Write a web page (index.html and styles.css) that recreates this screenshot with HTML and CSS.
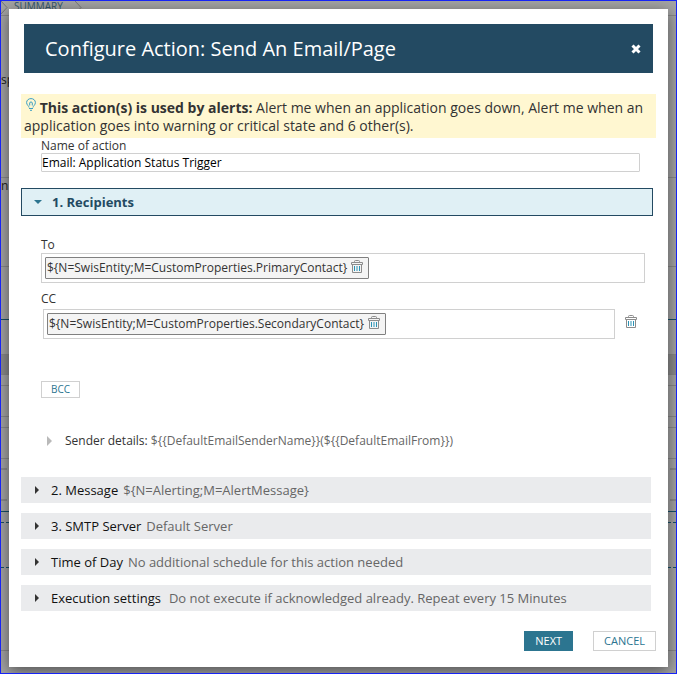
FILE: index.html
```html
<!DOCTYPE html>
<html lang="en">
<head>
    <meta charset="utf-8">
    <title>Configure Action: Send An Email/Page</title>
    <link rel="stylesheet" href="styles.css">
</head>
<body>
    <!-- icons shared by the dialog -->
    <svg class="sprite" aria-hidden="true">
        <symbol id="trash" viewBox="0 0 12 13">
            <path d="M3.500 2V1.500Q3.500 .5 4.500 .5H7.500Q8.500 .5 8.500 1.500V2M.5 2.500H11.500V4.500H.5zM1.500 4.500V12.500H10.500V4.500" fill="none" stroke="#8c8c8c"/>
            <path d="M3.500 6V11M6 6V11M8.500 6V11" fill="none" stroke="#2b93b5"/>
        </symbol>
    </svg>

    <div class="screen">
        <div class="page" aria-hidden="true">
            <div class="row crumbs">
                <svg class="chevron" viewBox="0 0 7 14"><path d="M0 0L6 6.500L0 13"/></svg>
                <span class="crumb">SUMMARY</span>
                <svg class="chevron" viewBox="0 0 7 14"><path d="M0 0L6 6.500L0 13"/></svg>
            </div>
            <div class="row intro">sp</div>
            <div class="row name">n</div>
            <div class="row tabs"></div>
            <div class="row space"></div>
            <div class="row band"></div>
            <div class="row thin"></div>
            <div class="row line"></div>
            <div class="row thin"></div>
            <div class="row line"></div>
            <div class="row thin ticks"></div>
            <div class="row line ticks"></div>
            <div class="row thin teal"></div>
            <div class="row thin dashed"></div>
            <div class="row drop dashed"></div>
            <div class="row foot"></div>
        </div>

        <div class="dialog" role="dialog" aria-labelledby="title">
            <div class="header">
                <h1 id="title">Configure Action: Send An Email/Page</h1>
                <button class="close" type="button" aria-label="Close">
                    <svg width="10" height="10" viewBox="0 0 10 10"><path d="M1.500 1.500L8.500 8.500M8.500 1.500L1.500 8.500" stroke="#fff" stroke-width="3"/></svg>
                </button>
            </div>

            <p class="note">
                <svg class="bulb" width="10" height="13" viewBox="0 0 10 13" fill="none" stroke="#3c9fc4">
                    <path d="M3 9.500C3 8 .6 7 .6 4.600C.6 2.200 2.600 .6 5 .6S9.400 2.200 9.400 4.600C9.400 7 7 8 7 9.500"/>
                    <path d="M3.700 7.500V5Q3.700 4 5 4T6.300 5V7.500M3 10.500H7M4 12.300H6"/>
                </svg>
                <strong>This action(s) is used by alerts:</strong> Alert me when an application goes down, Alert me when an application goes into warning or critical state and 6 other(s).
            </p>

            <form>
                <div class="field">
                    <label for="actionName">Name of action</label>
                    <input class="input" type="text" id="actionName" value="Email: Application Status Trigger">
                </div>

                <button class="section open" type="button" aria-expanded="true">
                    <svg class="arrow" width="8" height="8" viewBox="0 0 8 8"><path d="M0 2H8L4 6z"/></svg>
                    1. Recipients
                </button>

                <div class="recipients">
                    <label for="to">To</label>
                    <div class="tokens">
                        <span class="token">${N=SwisEntity;M=CustomProperties.PrimaryContact}
                            <button class="remove" type="button" aria-label="Remove"><svg width="12" height="13"><use href="#trash"/></svg></button>
                        </span>
                        <input type="text" id="to">
                    </div>
                    <label for="cc">CC</label>
                    <div class="cc">
                        <div class="tokens">
                            <span class="token">${N=SwisEntity;M=CustomProperties.SecondaryContact}
                                <button class="remove" type="button" aria-label="Remove"><svg width="12" height="13"><use href="#trash"/></svg></button>
                            </span>
                            <input type="text" id="cc">
                        </div>
                        <button class="remove" type="button" aria-label="Remove CC"><svg width="12" height="13"><use href="#trash"/></svg></button>
                    </div>
                    <button class="bcc" type="button">BCC</button>
                    <button class="sender" type="button" aria-expanded="false">
                        <svg width="5" height="10" viewBox="0 0 5 10"><path d="M0 0L5 5L0 10z" fill="#b9b9b9"/></svg>
                        <span>Sender details: <span class="value">${{DefaultEmailSenderName}}(${{DefaultEmailFrom}})</span></span>
                    </button>
                </div>

                <div class="sections">
                    <button class="section" type="button" aria-expanded="false">
                        <svg class="arrow" width="8" height="8" viewBox="0 0 8 8"><path d="M2 0L6 4L2 8z"/></svg>
                        2. Message <span class="value">${N=Alerting;M=AlertMessage}</span>
                    </button>
                    <button class="section" type="button" aria-expanded="false">
                        <svg class="arrow" width="8" height="8" viewBox="0 0 8 8"><path d="M2 0L6 4L2 8z"/></svg>
                        3. SMTP Server <span class="value">Default Server</span>
                    </button>
                    <button class="section" type="button" aria-expanded="false">
                        <svg class="arrow" width="8" height="8" viewBox="0 0 8 8"><path d="M2 0L6 4L2 8z"/></svg>
                        Time of Day <span class="value">No additional schedule for this action needed</span>
                    </button>
                    <button class="section wide" type="button" aria-expanded="false">
                        <svg class="arrow" width="8" height="8" viewBox="0 0 8 8"><path d="M2 0L6 4L2 8z"/></svg>
                        Execution settings <span class="value">Do not execute if acknowledged already. Repeat every 15 Minutes</span>
                    </button>
                </div>

                <div class="buttons">
                    <button class="button primary" type="button">NEXT</button>
                    <button class="button" type="button">CANCEL</button>
                </div>
            </form>
        </div>
    </div>
</body>
</html>
```
FILE: styles.css
```css
* {
    box-sizing: border-box;
}
body {
    margin: 0;
    font-family: "Open Sans", sans-serif;
    font-size: 12px;
    line-height: 16px;
    color: #333;
}
button, input {
    font: inherit;
    color: inherit;
    border-radius: 0;
}
button {
    padding: 0;
    border: 0;
    background: none;
    text-align: left;
}
svg {
    display: block;
    flex: none;
}
.sprite {
    position: absolute;
    width: 0;
    height: 0;
}
.screen {
    position: relative;
    min-height: 100vh;
    padding: 8px 8px 6px;
    border: 1px solid #1623f5;
    overflow: hidden;
}

/* dimmed page behind the dialog */
.page {
    position: absolute;
    inset: 0;
    background: #a3a3a3;
    color: #222;
}
.row {
    border-bottom: 1px solid #888;
}
.crumbs {
    display: flex;
    gap: 6px;
    height: 15px;
}
.crumb {
    margin: -3px 6px 0 0;
    font-size: 10px;
    color: #31566b;
}
.chevron {
    width: 7px;
    height: 14px;
    fill: none;
    stroke: #777;
}
.intro {
    height: 162px;
    padding-top: 56px;
}
.name {
    height: 89px;
}
.tabs {
    height: 53px;
    border-color: #174f68;
}
.space {
    height: 35px;
}
.band {
    height: 20px;
    background: #8b8b8b;
}
.thin {
    height: 11px;
}
.line {
    height: 31px;
}
.ticks {
    border-bottom: 2px dashed #8b8b8b;
}
.teal {
    border-color: #174f68;
}
.dashed {
    border-bottom: 1px dashed #174f68;
}
.drop {
    height: 45px;
}
.foot {
    height: 83px;
}

.dialog {
    position: relative;
    padding: 15px 12px 16px;
    background: #fff;
    box-shadow: 0 4px 14px rgba(0, 0, 0, 0.5);
}
.header {
    display: flex;
    align-items: center;
    justify-content: space-between;
    height: 49px;
    margin: 0 3px;
    padding: 0 12px 0 21px;
    background: #234a62;
    color: #fff;
}
h1 {
    margin: 0;
    font-size: 20px;
    font-weight: normal;
    line-height: 28px;
}
.note {
    margin: 21px 0 0;
    padding: 4px 3px 3px;
    background: #fff7d1;
    font-size: 14px;
    line-height: 18px;
}
.bulb {
    display: inline-block;
    margin-left: 2px;
    vertical-align: 2px;
}
.field {
    display: flex;
    flex-direction: column;
    margin: 0 16px 16px 20px;
}
.field label {
    line-height: 15px;
}
.input {
    height: 19px;
    padding: 0;
    border: 1px solid #d0d0d0;
    border-radius: 1px;
    color: #000;
}
.section {
    display: flex;
    align-items: center;
    gap: 5px;
    height: 26px;
    padding-left: 12px;
    background: #eaebed;
    font-size: 13px;
    color: #111;
}
.section .arrow {
    margin-right: 5px;
    fill: #333;
}
.wide {
    gap: 8px;
}
.wide .arrow {
    margin-right: 2px;
}
.value {
    color: #666;
}
.open {
    width: calc(100% - 3px);
    height: 28px;
    border: 1px solid #234a62;
    background: #e0f0f5;
    font-weight: bold;
    color: #234a62;
}
.open .arrow {
    fill: #2c7590;
}
.recipients {
    margin: 21px 11px 28px 20px;
}
.recipients label {
    display: block;
}
.tokens {
    display: flex;
    align-items: center;
    flex: 1;
    height: 30px;
    margin-bottom: 8px;
    padding: 0 3px;
    border: 1px solid #d0d0d0;
}
.tokens input {
    flex: 1;
    min-width: 0;
    border: 0;
    outline: 0;
}
.token {
    display: flex;
    align-items: center;
    gap: 4px;
    height: 22px;
    padding: 0 5px 0 1px;
    border: 1px solid #808080;
    border-radius: 1px;
    background: #f4f4f4;
}
.remove {
    margin-bottom: 3px;
}
.cc {
    display: flex;
    align-items: center;
    gap: 10px;
    margin: 2px 8px 42px 2px;
}
.cc .tokens {
    margin: 0;
}
.cc > .remove {
    margin-bottom: 6px;
}
.bcc {
    display: block;
    height: 17px;
    padding: 0 9px;
    border: 1px solid #d0d0d0;
    font-size: 10px;
    line-height: 15px;
    color: #2c7590;
}
.sender {
    display: flex;
    align-items: center;
    gap: 13px;
    margin: 35px 0 0 6px;
}
.sections {
    display: grid;
    gap: 10px;
    margin-right: 5px;
}
.buttons {
    display: flex;
    justify-content: flex-end;
    gap: 20px;
    margin-top: 20px;
}
.button {
    height: 20px;
    padding: 0 10px;
    border: 1px solid #d0d0d0;
    font-size: 11px;
    line-height: 18px;
    color: #2c7590;
}
.primary {
    border-color: #2c7590;
    background: #2c7590;
    font-weight: 500;
    color: #fff;
}
```
